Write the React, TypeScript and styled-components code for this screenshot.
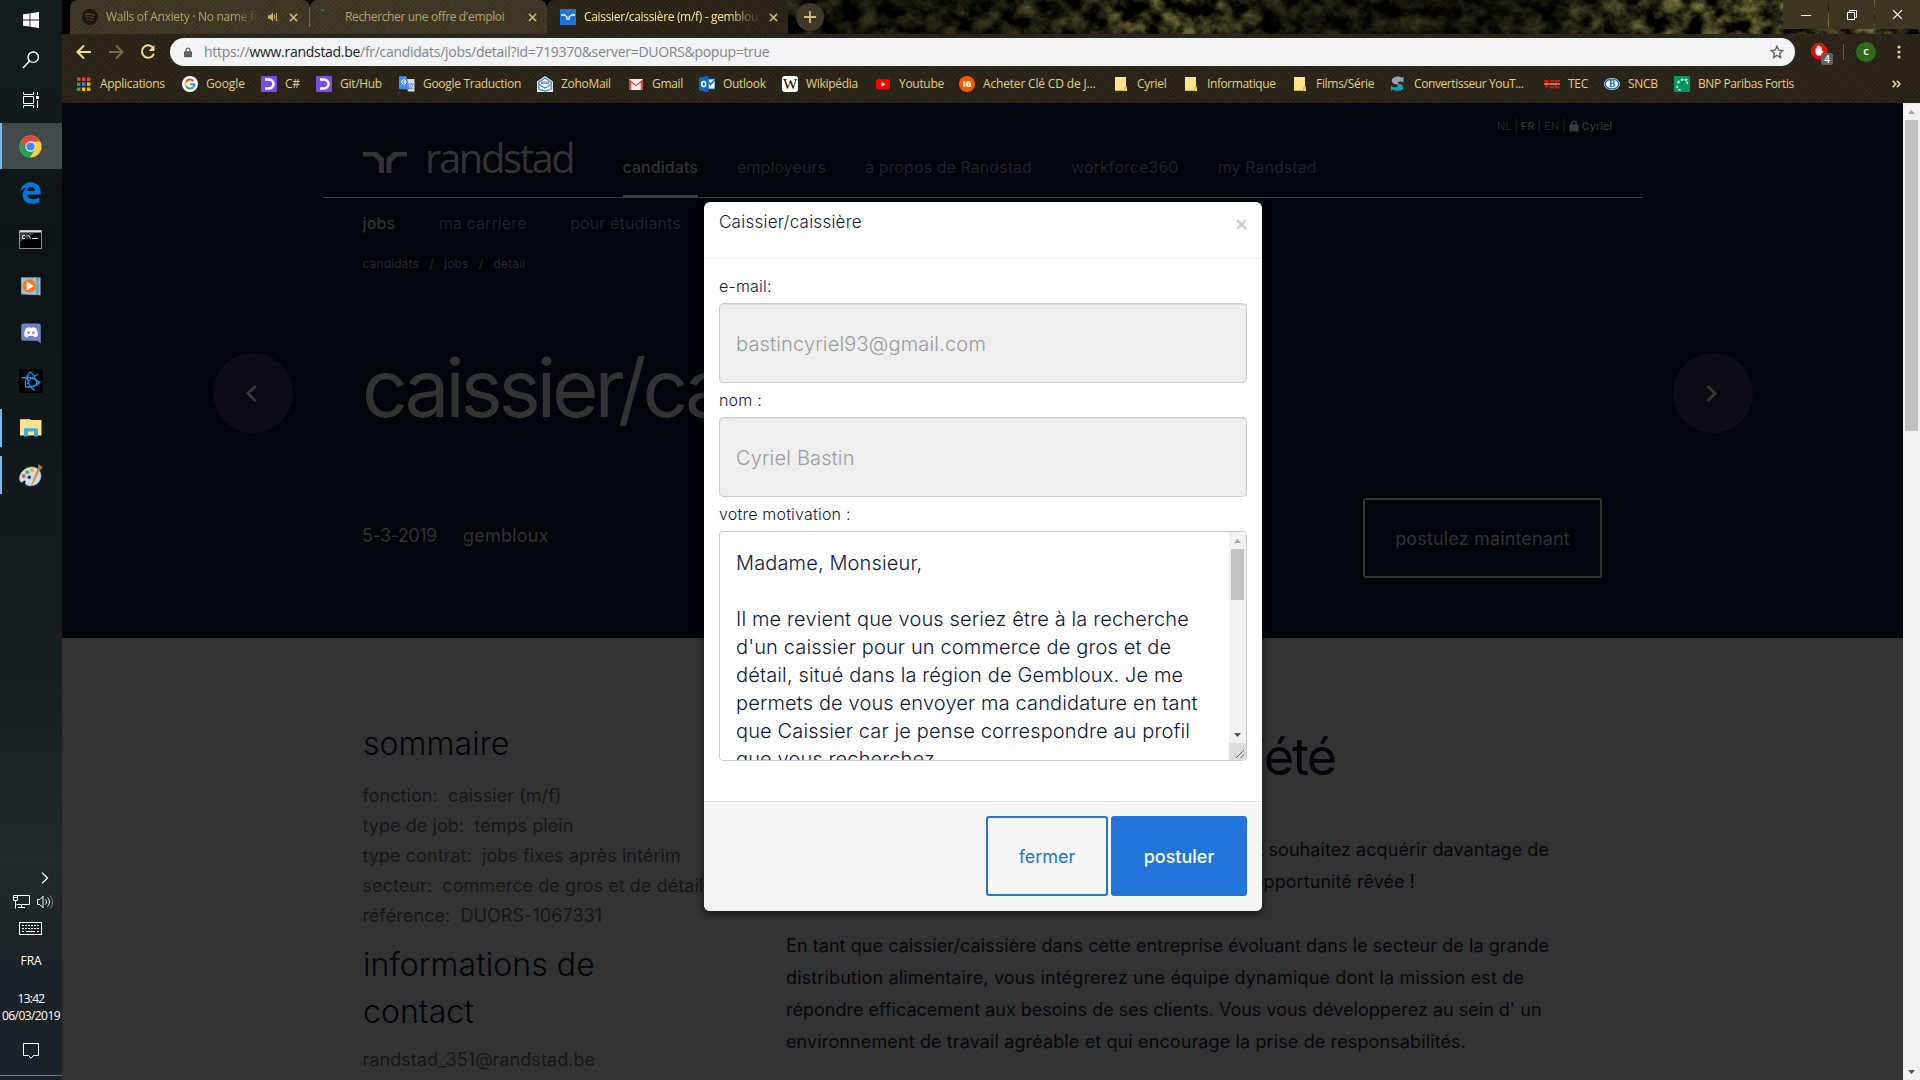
import React from 'react';
import styled, { createGlobalStyle, css } from 'styled-components';

const ui = '"Open Sans", "Noto Sans", sans-serif';
const brand = 'Inter, Roboto, sans-serif';

const GlobalStyle = createGlobalStyle`
  *, *::before, *::after { box-sizing: border-box; }
  body { margin: 0; overflow: hidden; background: #000; }
  svg { display: block; flex: none; }
`;

const Screen = styled.div`
  display: flex;
  width: 1920px;
  height: 1080px;
  overflow: hidden;
`;

/* ---------- Taskbar ---------- */

const Taskbar = styled.aside`
  display: flex;
  flex-direction: column;
  flex: none;
  width: 62px;
  background: linear-gradient(#141d20 0, #111b1b 120px, #0d1415 230px, #111819 420px, #131b1d 560px, #1a2123 720px, #222a2b 860px, #1b2328 960px, #1b2229 1080px);
  color: #fff;
  font-family: ${ui};
`;

const SystemSlot = styled.div`
  display: flex;
  align-items: center;
  justify-content: center;
  height: 40px;
`;

const AppList = styled.div`
  display: flex;
  flex-direction: column;
  margin-top: 3px;
`;

const AppSlot = styled.div<{ $active?: boolean }>`
  display: flex;
  align-items: center;
  height: ${(p) => (p.$active ? 46 : 47)}px;
  background: ${(p) => (p.$active ? '#424a4b' : 'transparent')};
`;

const RunBar = styled.span<{ $state?: 'active' | 'open' }>`
  width: 2px;
  height: ${(p) => (p.$state === 'active' ? 46 : 38)}px;
  background: ${(p) => (p.$state ? '#76b9ed' : 'transparent')};
`;

const AppIcon = styled.div`
  display: flex;
  justify-content: center;
  flex: 1;
  padding-right: 3px;
`;

const Tray = styled.div`
  display: flex;
  flex-direction: column;
  align-items: center;
  margin-top: auto;
  height: 210px;
`;

const TrayChevron = styled.div`
  display: flex;
  justify-content: flex-end;
  width: 100%;
  padding: 2px 13px 0 0;
  height: 22px;
`;

const TrayPair = styled.div`
  display: flex;
  align-items: center;
  gap: 7px;
  height: 20px;
  padding-left: 5px;
`;

const TrayKeyboard = styled.div`
  margin: 10px 1px 0 0;
`;

const TrayText = styled.div<{ $top: number; $ls: number }>`
  margin-top: ${(p) => p.$top}px;
  font-size: 12px;
  line-height: 17px;
  letter-spacing: ${(p) => p.$ls}px;
  white-space: nowrap;
`;

const TrayNote = styled.div`
  margin-top: 19px;
`;

const PeekLine = styled.div`
  width: 100%;
  height: 5px;
  margin-top: auto;
  border-top: 1px solid #757a7d;
`;

/* ---------- Browser chrome ---------- */

const Browser = styled.main`
  display: flex;
  flex-direction: column;
  flex: 1;
  min-width: 0;
`;

const weave = css`
  background-image:
    repeating-linear-gradient(45deg, rgba(255, 230, 150, 0.03) 0 1px, transparent 1px 3px),
    repeating-linear-gradient(-45deg, rgba(0, 0, 0, 0.09) 0 1px, transparent 1px 4px);
`;

const TabStrip = styled.div`
  position: relative;
  display: flex;
  height: 34px;
  padding-left: 8px;
  background: #050503;
`;

const Foliage = styled.svg`
  position: absolute;
  inset: 0;
`;

const Tab = styled.div<{ $width: number; $active?: boolean }>`
  position: relative;
  display: flex;
  align-items: center;
  width: ${(p) => p.$width}px;
  height: 34px;
  border-radius: 8px 8px 0 0;
  background-color: ${(p) => (p.$active ? '#2a2418' : '#3e3726')};
  ${weave}
  color: ${(p) => (p.$active ? '#ffe890' : '#b5a26b')};
  font: 12px/20px ${ui};
`;

const TabIcon = styled.div<{ $left: number }>`
  display: flex;
  width: ${(p) => p.$left + 16}px;
  padding-left: ${(p) => p.$left}px;
`;

const TabTitle = styled.div<{ $width: number; $fade?: boolean; $ls: number }>`
  width: ${(p) => p.$width}px;
  margin-left: 8px;
  overflow: hidden;
  white-space: nowrap;
  letter-spacing: ${(p) => p.$ls}px;
  ${(p) => p.$fade && css`mask-image: linear-gradient(90deg, #000 82%, transparent);`}
`;

const TabTail = styled.div`
  display: flex;
  align-items: center;
  gap: 11px;
  margin-left: auto;
  padding-right: 10px;
`;

const TabDivider = styled.span`
  width: 1px;
  height: 20px;
  margin-right: -10px;
  background: #7a6d4a;
`;

const NewTab = styled.div`
  position: relative;
  display: flex;
  align-items: center;
  justify-content: center;
  width: 28px;
  height: 28px;
  margin: 3px 0 0 8px;
  border-radius: 50%;
  background: #40392a;
`;

const WindowControls = styled.div`
  position: relative;
  display: flex;
  gap: 1px;
  margin-left: auto;
`;

const WindowButton = styled.div`
  display: flex;
  align-items: center;
  justify-content: center;
  width: 45px;
  height: 29px;
  background: #3e3623;
`;

const Toolbar = styled.div`
  display: flex;
  align-items: center;
  height: 36px;
  padding: 0 16px 0 13px;
  background-color: #2a2418;
  ${weave}
`;

const NavIcons = styled.div`
  display: flex;
  align-items: center;
  gap: 14px;
  width: 95px;
`;

const AddressBar = styled.div`
  display: flex;
  align-items: center;
  width: 1625px;
  height: 28px;
  padding: 0 11px 0 14px;
  border-radius: 14px;
  background: #f1f3f4;
`;

const Url = styled.div`
  flex: 1;
  margin-left: 12px;
  color: #80868b;
  font: 14px/20px ${ui};
  letter-spacing: -0.29px;
  white-space: nowrap;
`;

const Host = styled.span`
  color: #202124;
`;

const Extensions = styled.div`
  display: flex;
  align-items: center;
  flex: 1;
  padding-left: 16px;
`;

const ExtDivider = styled.span`
  width: 1px;
  height: 16px;
  margin: 0 12px 0 10px;
  background: #6a5e3e;
`;

const Avatar = styled.span`
  width: 20px;
  height: 20px;
  margin-right: 21px;
  border-radius: 50%;
  background: #33691e;
  color: #fff;
  font: 600 11px/18px ${ui};
  text-align: center;
`;

const BookmarkBar = styled.nav`
  display: flex;
  align-items: center;
  height: 33px;
  padding: 0 0 5px 14px;
  background-color: #2a2418;
  ${weave}
  color: #e3cf7f;
  font: 12px/20px ${ui};
`;

const Bookmark = styled.div<{ $pitch: number; $ls?: number }>`
  display: flex;
  align-items: center;
  gap: 8px;
  flex: none;
  width: ${(p) => p.$pitch}px;
  letter-spacing: ${(p) => p.$ls ?? -0.3}px;
  white-space: nowrap;
`;

const More = styled.div`
  margin-left: auto;
  padding-right: 19px;
`;

/* ---------- Page ---------- */

const Viewport = styled.div`
  position: relative;
  display: flex;
  flex: 1;
  min-height: 0;
`;

const Page = styled.div`
  flex: 1;
  overflow: hidden;
  background: #333;
  font-family: ${brand};
`;

const Hero = styled.section`
  display: flex;
  flex-direction: column;
  height: 535px;
  background: #02040c;
  color: #333;
`;

const Container = styled.div`
  width: 1320px;
  margin-left: 261px;
`;

const Languages = styled.div`
  display: flex;
  align-items: center;
  justify-content: flex-end;
  height: 33px;
  padding: 13px 31px 0 0;
  gap: 3px;
  font-size: 11px;
  line-height: 20px;
  color: #24262b;
`;

const Strong = styled.span`
  color: #343436;
  font-weight: 500;
  letter-spacing: -0.1px;
`;

const Masthead = styled.header`
  display: flex;
  height: 62px;
  padding-left: 40px;
  border-bottom: 1px solid #3c3c3e;
`;

const Logo = styled.div`
  display: flex;
  align-items: flex-start;
  width: 259.500px;
  padding-top: 16px;
`;

const LogoWord = styled.div`
  margin: -21px 0 0 18px;
  font: 40px/54px "Open Sans", "Noto Sans", sans-serif;
  letter-spacing: -2.400px;
`;

const MainNav = styled.nav`
  display: flex;
  gap: 39.2px;
`;

const MainLink = styled.a<{ $active?: boolean }>`
  height: 61px;
  padding-top: 21px;
  border-bottom: 2px solid ${(p) => (p.$active ? '#3c3c3e' : 'transparent')};
  color: ${(p) => (p.$active ? '#333' : '#202228')};
  font-size: 16px;
  font-weight: ${(p) => (p.$active ? 500 : 400)};
  line-height: 20px;
  letter-spacing: 0.06px;
  white-space: nowrap;
`;

const SubNav = styled.nav`
  display: flex;
  gap: 43.500px;
  padding: 15px 0 0 39.500px;
`;

const SubLink = styled.a<{ $active?: boolean }>`
  color: ${(p) => (p.$active ? '#333' : '#202228')};
  font-size: 16px;
  font-weight: ${(p) => (p.$active ? 500 : 400)};
  line-height: 20px;
  letter-spacing: 0.12px;
`;

const Crumbs = styled.div`
  display: flex;
  gap: 10.400px;
  margin-top: 23px;
  padding-left: 39.500px;
  color: #26282c;
  font-size: 12px;
  line-height: 16px;
  letter-spacing: 0.12px;
`;

const TitleRow = styled.div`
  display: flex;
  width: 1540px;
  height: 80px;
  margin: 81px 0 0 151px;
`;

const RoundButton = styled.div`
  display: flex;
  align-items: center;
  justify-content: center;
  flex: none;
  width: 80px;
  height: 80px;
  padding: 1px 4px 0 0;
  border-radius: 50%;
  background: #0c0c14;
`;

const JobTitle = styled.h1`
  flex: 1;
  margin: 0 0 0 69px;
  font-size: 80px;
  font-weight: 400;
  line-height: 70px;
  letter-spacing: -4.1px;
`;

const MetaRow = styled.div`
  display: flex;
  align-items: center;
  margin-top: 65px;
  padding: 0 41px 0 39px;
  font-size: 18px;
`;

const Meta = styled.span<{ $width: number; $ls: number }>`
  width: ${(p) => p.$width}px;
  padding-bottom: 6px;
  letter-spacing: ${(p) => p.$ls}px;
`;

const ApplyNow = styled.div`
  width: 239px;
  height: 80px;
  margin-left: auto;
  border: 2px solid #333;
  border-radius: 3px;
  line-height: 77px;
  letter-spacing: 0.15px;
  text-align: center;
`;

const Details = styled.section`
  display: flex;
  width: 1320px;
  margin-left: 261px;
  padding-left: 40px;
`;

const Summary = styled.div`
  width: 423px;
  padding-top: 82px;
`;

const SideHeading = styled.h2`
  width: 260px;
  margin: 0;
  color: #03050d;
  font-size: 32px;
  font-weight: 350;
  line-height: 47px;
  letter-spacing: 0.05px;
`;

const Facts = styled.div<{ $top: number; $bottom: number }>`
  margin: ${(p) => p.$top}px 0 ${(p) => p.$bottom}px -0.5px;
  color: #161719;
  font-size: 18px;
  line-height: 30px;
  letter-spacing: 0.06px;
  white-space: pre;
`;

const Company = styled.div`
  padding-top: 89px;
`;

const CompanyHeading = styled.h2`
  width: 549px;
  margin: 0 0 47px;
  color: #03050d;
  font-size: 52px;
  font-weight: 400;
  line-height: 60px;
  letter-spacing: -2px;
  text-align: right;
`;

const Line = styled.div<{ $right?: number; $ls?: number }>`
  width: ${(p) => (p.$right ? `${p.$right}px` : 'auto')};
  height: 32px;
  color: #07080c;
  font-size: 18px;
  line-height: 32px;
  letter-spacing: ${(p) => p.$ls ?? 0.06}px;
  text-align: ${(p) => (p.$right ? 'right' : 'left')};
  white-space: nowrap;
`;

const Scrollbar = styled.div`
  display: flex;
  flex-direction: column;
  align-items: center;
  flex: none;
  width: 17px;
  background: #f1f1f1;
`;

const ScrollArrow = styled.div`
  display: flex;
  align-items: center;
  justify-content: center;
  height: 17px;
`;

const Thumb = styled.div<{ $height: number }>`
  width: 13px;
  height: ${(p) => p.$height}px;
  margin-bottom: auto;
  background: #c1c1c1;
`;

/* ---------- Modal ---------- */

const Modal = styled.div`
  position: absolute;
  left: 642px;
  top: 99px;
  display: flex;
  flex-direction: column;
  width: 558px;
  height: 709px;
  border-radius: 6px;
  overflow: hidden;
  background: #fff;
  box-shadow: 0 3px 9px rgba(0, 0, 0, 0.6);
  color: #0f1941;
  font-family: ${brand};
  font-weight: 350;
`;

const ModalHeader = styled.div`
  display: flex;
  justify-content: space-between;
  height: 57px;
  padding: 8px 15px 0;
  border-bottom: 1px solid #eee;
  font-size: 17px;
  line-height: 24px;
  letter-spacing: 0.24px;
`;

const Close = styled.div`
  padding: 9px 0 0;
`;

const ModalBody = styled.div`
  flex: 1;
  padding: 16px 15px 0;
`;

const Label = styled.div<{ $first?: boolean }>`
  height: ${(p) => (p.$first ? 28 : 34)}px;
  padding-top: ${(p) => (p.$first ? 1 : 7)}px;
  font-size: 16px;
  line-height: 20px;
  letter-spacing: 0.2px;
`;

const Field = styled.div`
  height: 80px;
  padding: 0 16px;
  border: 1px solid #ccc;
  border-radius: 4px;
  background: #eee;
  box-shadow: inset 0 1px 1px rgba(0, 0, 0, 0.075);
  color: #9c9c9c;
  font-size: 20px;
  line-height: 80px;
  letter-spacing: 0.18px;
`;

const Letter = styled.div`
  display: flex;
  height: 230px;
  border: 1px solid #ccc;
  border-radius: 4px;
  overflow: hidden;
`;

const LetterText = styled.div`
  flex: 1;
  height: 228px;
  padding: 17px 0 0 16px;
  overflow: hidden;
  font-size: 20px;
  line-height: 28px;
  letter-spacing: 0.14px;
  white-space: pre;
`;

const LetterSide = styled.div`
  display: flex;
  flex-direction: column;
  width: 17px;
`;

const LetterScroll = styled(Scrollbar)`
  height: 211px;
`;

const Grip = styled.div`
  height: 17px;
  background: #dcdcdc;
`;

const ModalFooter = styled.div`
  display: flex;
  justify-content: flex-end;
  gap: 3px;
  height: 110px;
  padding: 14px 15px 0;
  border-top: 1px solid #ddd;
  background: #f5f5f5;
  box-shadow: inset 0 1px 0 #fff;
`;

const Button = styled.div<{ $primary?: boolean }>`
  width: ${(p) => (p.$primary ? 136 : 122)}px;
  height: 80px;
  border: 2px solid #2175d9;
  border-radius: 3px;
  background: ${(p) => (p.$primary ? '#2175d9' : 'transparent')};
  color: ${(p) => (p.$primary ? '#fff' : '#2175d9')};
  font-size: 18px;
  font-weight: ${(p) => (p.$primary ? 500 : 400)};
  line-height: 78px;
  text-align: center;
`;

/* ---------- Icons ---------- */

const W = '#fff';

const WindowsIcon = () => (
  <svg width="16" height="16" viewBox="0 0 16 16" fill={W}>
    <path d="M0 2.3 6.5 1.4V7.4H0zM7.4 1.2 16 0v7.4H7.4zM0 8.4h6.5v6.2L0 13.7zM7.4 8.4H16V16l-8.6-1.2z" />
  </svg>
);
const SearchIcon = () => (
  <svg width="18" height="18" viewBox="0 0 18 18" fill="none" stroke={W} strokeWidth="1.4">
    <circle cx="11.2" cy="6.2" r="5.2" /><path d="M7.5 10 1 17" />
  </svg>
);
const TaskViewIcon = () => (
  <svg width="17" height="16" viewBox="0 0 17 16" fill="none" stroke={W}>
    <path d="M.5 0v2.5h10V0M.5 16v-2.5h10V16M.5 4.5h10v7H.5zM14.5 0v3M14.5 8.500v7.500" strokeWidth="1" />
    <rect x="13" y="4" width="3" height="3" fill={W} stroke="none" />
  </svg>
);
const ChromeIcon = () => (
  <svg width="23" height="23" viewBox="0 0 24 24">
    <circle cx="12" cy="12" r="11.500" fill="#ffcd42" />
    <path d="M12 12 2 6.200A11.500 11.500 0 0 0 11.500 23.500L16.800 14.700z" fill="#1aa260" />
    <path d="M2 6.200A11.500 11.500 0 0 1 22.200 6.700H12L7 14.700z" fill="#dd4b3e" />
    <circle cx="12" cy="12" r="5.400" fill="#f1f1f1" /><circle cx="12" cy="12" r="4.300" fill="#4688f1" />
  </svg>
);
const EdgeIcon = () => (
  <svg width="21" height="22" viewBox="0 0 21 22" fill="#0078d7">
    <path d="M.3 9.800C1.200 3.800 5.400.3 10.600.3c5.900 0 10 4 10 9.700v2.500H7.200c.3 3.200 3 4.700 6.100 4.700 2.200 0 4-.6 5.700-1.600v4.600c-2 1-4.300 1.500-6.800 1.500-5.800 0-9.600-3.300-9.600-8.600 0-3.700 2-6.500 5.300-8-3.200.3-5.900 2-7.600 4.700zM7.300 8.900h7.600c0-2.400-1.300-3.900-3.600-3.900-2.200 0-3.700 1.500-4 3.900z" />
  </svg>
);
const CmdIcon = () => (
  <svg width="23" height="19" viewBox="0 0 23 19">
    <rect x=".5" y=".5" width="22" height="18" fill="#000" stroke="#8b8f92" />
    <path d="M1 1.500h21" stroke="#dfe3e5" strokeWidth="2" />
    <path d="M1 3h15L1 12z" fill="#3a3c3e" />
    <path d="M6 5.500H3.500v3H6M8 5.500v.8M8 7.700v.8M9.500 5l2 4M13 8.500h6" stroke="#e4e4e4" fill="none" />
  </svg>
);
const MediaIcon = () => (
  <svg width="20" height="19" viewBox="0 0 20 19">
    <path d="M13 .5h6.500v18L13 17.500z" fill="#8cc7de" /><path d="M17 .6v17.600" stroke="#4d8da8" />
    <path d="M.5.8h15v17L.5 17z" fill="#9cc5d8" stroke="#6fa5bb" />
    <circle cx="8.300" cy="9" r="6.700" fill="#f37a20" /><path d="M5.700 4.600v9l7-4.500z" fill={W} />
  </svg>
);
const DiscordIcon = () => (
  <svg width="20" height="21" viewBox="0 0 20 21">
    <path d="M2.500.5h15A2.300 2.300 0 0 1 19.800 2.800V20.500L16.300 17.800H2.500A2.300 2.300 0 0 1 .2 15.500V2.800A2.300 2.300 0 0 1 2.500.5z" fill="#7184c9" />
    <path d="M5 5.500c1.500-1 2.300-1.200 3.300-1.300l.5.600h2.600l.5-.6c1 .1 1.800.4 3.200 1.300 1.300 2.300 1.800 4.700 1.700 7.200-1 1.100-2 1.500-3.300 1.600l-.9-1.300H7.500l-.9 1.300c-1.300-.1-2.400-.6-3.300-1.600-.1-2.500.4-4.900 1.700-7.200z" fill={W} />
    <circle cx="7.600" cy="9.700" r="1.300" fill="#7184c9" /><circle cx="12.300" cy="9.700" r="1.300" fill="#7184c9" />
  </svg>
);
const BattleNetIcon = () => (
  <svg width="24" height="24" viewBox="0 0 24 24" fill="none" stroke="#1a9bea" strokeWidth="1.200">
    <rect width="24" height="24" rx="1.500" fill="#000" stroke="none" />
    <path d="M2 9c6-1.500 14-.5 18.500 4.500-1.500 3-8 4.500-13.500 4.500-2-4 1-12.500 4-15 3 1.500 6.500 7.500 7 13" />
    <path d="M9 6c-1 6 2 12 6.500 15.500M21.500 12.500C17 17 10 19.500 6.500 17.500M8 15.500c1-4.500 6-8.500 11.500-10" />
  </svg>
);
const ExplorerIcon = () => (
  <svg width="22" height="19" viewBox="0 0 22 19">
    <path d="M0 2V1h10l1 1z" fill="#f2bc2b" /><path d="M0 2h21.500v15.500H0z" fill="#ffe391" />
    <path d="M4 18.500v-7.200a1 1 0 0 1 1-1h12a1 1 0 0 1 1 1v7.200h-4v-5H8v5z" fill="#35b0e4" />
  </svg>
);
const PaintIcon = () => (
  <svg width="24" height="24" viewBox="0 0 24 24">
    <path d="M13 4C6 4 .5 10 .5 15c0 4 2.500 5 3.500 3.500 1.500-2 3-1 2.500 1-.5 2 1.500 3.300 5 3.300 6.500 0 10.500-5 10.500-10S18 4 13 4z" fill="#c6deed" stroke="#8fb7cf" strokeWidth=".6" />
    <circle cx="4.800" cy="13" r="2" fill="#d95a50" /><circle cx="8.300" cy="9.300" r="2" fill="#5eb053" /><circle cx="13" cy="7.300" r="2.200" fill="#f2b134" /><circle cx="10.300" cy="14.300" r="1.700" fill="#1c3242" />
    <path d="M11.500 23.500c1-3 3-8 6.500-16l2 1c-3 7-5.500 12-8.500 15z" fill="#e58a2b" /><path d="M18 7.500 19.500 3l-1-2.500L24 4.500 20 8.500z" fill="#a97850" />
  </svg>
);
const ChevronTray = () => (
  <svg width="8" height="12" viewBox="0 0 8 12" fill="none" stroke={W} strokeWidth="1.300"><path d="m1 .6 5.500 5.400L1 11.400" /></svg>
);
const NetworkIcon = () => (
  <svg width="17" height="14" viewBox="0 0 17 14" fill="none" stroke={W}>
    <path d="M5 .5h11.500v9H3.500M.5.500h4v5h-4zM2.500 5.500v8M0 2.500h5M8.500 9.500v3M5 12.500h7" />
  </svg>
);
const VolumeIcon = () => (
  <svg width="17" height="14" viewBox="0 0 17 14" fill="none" stroke={W}>
    <path d="M.6 4.500h2.200L6 1.200v11.600L2.800 9.500H.6zM8.500 4.500c1.300 1.500 1.300 3.500 0 5M10.500 2.500c2.500 2.500 2.500 6.500 0 9" />
    <path d="M13 .5c3.500 4 3.500 9 0 13" stroke="#7c8384" />
  </svg>
);
const KeyboardIcon = () => (
  <svg width="23" height="13" viewBox="0 0 23 13" fill="none" stroke={W}>
    <rect x=".5" y=".5" width="22" height="12" />
    <path d="M3 3.500h17M3 6.500h17" strokeDasharray="2 1" /><path d="M3 9.500h2M7 9.500h9M18 9.500h2" />
  </svg>
);
const NoteIcon = () => (
  <svg width="16" height="17" viewBox="0 0 16 17" fill="none" stroke={W}><path d="M.5.500h15v12H10.500L8 15.200 5.500 12.500H.5z" /></svg>
);

const SpotifyIcon = () => (
  <svg width="16" height="16" viewBox="0 0 16 16" fill="none" stroke="#4a402c">
    <circle cx="8" cy="8" r="8" fill="#1b1710" stroke="none" />
    <path d="M3 5.500c3.500-1 7-.6 10 1" strokeWidth="1.700" /><path d="M3.500 8.300c3-.8 6-.4 8.500.9" strokeWidth="1.400" /><path d="M4 10.900c2.500-.6 5-.3 7 .8" strokeWidth="1.200" />
  </svg>
);
const LoadingIcon = () => (
  <svg width="16" height="16" viewBox="0 0 16 16" fill="none"><path d="M0 1h3" stroke="#3d8b94" /></svg>
);
const RandstadFavicon = () => (
  <svg width="16" height="16" viewBox="0 0 16 16"><rect width="16" height="16" fill="#2175d9" /><path d="M1 6h3.500L7 8v3M15 6h-3.500L9 8v3" fill="none" stroke={W} strokeWidth="1.400" /></svg>
);
const SpeakerIcon = () => (
  <svg width="10" height="10" viewBox="0 0 10 10" fill="#c9b67c" stroke="#c9b67c"><path d="M0 3.200h2.300L5 .6v8.800L2.300 6.800H0z" stroke="none" /><path d="M6.500 2.800v4.400M8.500.8v8.400" /></svg>
);
const CrossIcon = ({ size = 9, color = '#c9b67c', width = 1.7 }: { size?: number; color?: string; width?: number }) => (
  <svg width={size} height={size} viewBox="0 0 10 10" stroke={color} strokeWidth={width}><path d="m1 1 8 8M9 1 1 9" /></svg>
);
const PlusIcon = () => (
  <svg width="12" height="12" viewBox="0 0 12 12" stroke="#d3bf80" strokeWidth="1.800"><path d="M6 0v12M0 6h12" /></svg>
);
const ArrowIcon = ({ flip, color }: { flip?: boolean; color: string }) => (
  <svg width="18" height="18" viewBox="0 0 18 18" fill="none" stroke={color} strokeWidth="2"><path d={flip ? 'M2 9h13M9 2.500 15.500 9 9 15.500' : 'M16 9H3M9 2.500 2.500 9 9 15.500'} /></svg>
);
const ReloadIcon = () => (
  <svg width="18" height="18" viewBox="0 0 18 18" fill="none" stroke="#f5dd8d" strokeWidth="2"><path d="M14.200 5A6.200 6.200 0 1 0 15 10.500" /><path d="M15.500 2v6h-6z" fill="#f5dd8d" stroke="none" /></svg>
);
const LockIcon = ({ color, w, h }: { color: string; w: number; h: number }) => (
  <svg width={w} height={h} viewBox="0 0 10 13"><path d="M1 5h8a1 1 0 0 1 1 1v5.500a1 1 0 0 1-1 1H1a1 1 0 0 1-1-1V6a1 1 0 0 1 1-1z" fill={color} /><path d="M2.500 5.500V3.500a2.500 2.500 0 0 1 5 0v2" fill="none" stroke={color} strokeWidth="1.400" /></svg>
);
const StarIcon = () => (
  <svg width="14" height="14" viewBox="0 0 14 14" fill="none" stroke="#5f6368" strokeWidth="1.400"><path d="m7 1.200 1.700 3.900 4.200.4-3.200 2.800.9 4.200L7 10.300l-3.600 2.200.9-4.200L1.100 5.500l4.200-.4z" /></svg>
);
const AdblockIcon = () => (
  <svg width="22" height="27" viewBox="0 -4 22 27">
    <path d="M4.700 0h6.600L16 4.700v6.600L11.300 16H4.700L0 11.300V4.700z" fill="#e40d0d" />
    <path d="M4.500 8V5.500h1.200V3.300H7v-.8h1.300v.8h1.300v1.300h1.200v4l1.200-1 .6.700-2.500 4.200H6.200L4.500 10z" fill={W} />
    <rect x="10" y="10" width="12" height="12" rx="2" fill="#616161" />
    <text x="16" y="19.800" fill="#fff" fontFamily="Open Sans, sans-serif" fontWeight="600" fontSize="10" textAnchor="middle">4</text>
  </svg>
);
const DotsIcon = () => (
  <svg width="4" height="14" viewBox="0 0 4 14" fill="#e8d288"><circle cx="2" cy="2" r="1.600" /><circle cx="2" cy="7" r="1.600" /><circle cx="2" cy="12" r="1.600" /></svg>
);
const MoreIcon = () => (
  <svg width="9" height="8" viewBox="0 0 9 8" fill="none" stroke="#e8d288" strokeWidth="1.700"><path d="m.7.7 3 3.300-3 3.300M4.900.7l3 3.300-3 3.300" /></svg>
);

const AppsIcon = () => {
  const colors = ['#ea4335', '#ea4335', '#ea4335', '#34a853', '#4285f4', '#fbbc05', '#34a853', '#fbbc05', '#fbbc05'];
  return (
    <svg width="16" height="16" viewBox="0 0 16 16">
      {colors.map((c, i) => <rect key={i} x={1 + (i % 3) * 5} y={1.500 + Math.floor(i / 3) * 5} width="3.400" height="3.400" fill={c} />)}
    </svg>
  );
};
const GoogleIcon = () => (
  <svg width="16" height="16" viewBox="0 0 16 16" fill="none" strokeWidth="2">
    <circle cx="8" cy="8" r="8" fill={W} />
    <path d="M4.200 5.800A4.400 4.400 0 0 1 11.300 5" stroke="#ea4335" /><path d="M4.200 5.700a4.600 4.600 0 0 0 0 4.600" stroke="#fbbc05" />
    <path d="M4.200 10.200a4.400 4.400 0 0 0 6.900 1.100" stroke="#34a853" /><path d="M11.100 11.300c.9-.8 1.300-1.900 1.300-3H8" stroke="#4285f4" />
  </svg>
);
const CrescentIcon = () => (
  <svg width="16" height="16" viewBox="0 0 16 16"><rect width="16" height="16" rx="1" fill="#7350ea" /><path d="M4 3.500h4a4.500 4.500 0 0 1 0 9H4" fill="none" stroke={W} strokeWidth="2.600" /><circle cx="5" cy="8" r="3" fill="#7350ea" /></svg>
);
const TranslateIcon = () => (
  <svg width="16" height="16" viewBox="0 0 16 16"><path d="M6 3h9.500v12.500H9z" fill="#d9dde0" /><path d="M0 1.200A1 1 0 0 1 1 .2h6.500l3.500 13H1a1 1 0 0 1-1-1z" fill="#4a8af4" /><path d="M7 5.200H4.800M6.300 4.300a2.200 2.200 0 1 0 .7 2H4.800" fill="none" stroke={W} /><path d="M10 8h4.500M12.300 7v1M11 13c2-1.200 2.700-3 2.800-5M11 9.500c.6 1.700 1.700 2.900 3.200 3.500" fill="none" stroke="#6b7a86" strokeWidth=".8" /></svg>
);
const ZohoIcon = () => (
  <svg width="16" height="16" viewBox="0 0 16 16"><path d="M0 5.500 8 0l8 5.500V16H0z" fill="#e9f2f7" /><path d="M1.800 6.300 8 2l6.200 4.300V13L8 15l-6.200-2z" fill={W} stroke="#3c8dbc" strokeWidth="1.300" /><path d="m2 8.500 6 3.500 6-3.500M4.500 8V6h7v2" fill="none" stroke="#3c8dbc" strokeWidth="1.200" /><path d="M5 7.500h6" stroke="#e08e3d" /></svg>
);
const GmailIcon = () => (
  <svg width="16" height="16" viewBox="0 0 16 16"><path d="M1 3h14v11H1z" fill="#eceff1" /><path d="M1 14V3l7 6 7-6v11h-2.200V6.500L8 10.500l-4.800-4V14z" fill="#d9453b" /></svg>
);
const OutlookIcon = () => (
  <svg width="16" height="16" viewBox="0 0 16 16"><path d="M9 3h7v10H9z" fill={W} stroke="#0b6ec5" /><path d="m9.500 6 2 2.500L15.500 4" fill="none" stroke="#0b6ec5" strokeWidth="1.500" /><path d="M0 1.700 9.500 0v16L0 14.300z" fill="#0b6ec5" /><ellipse cx="4.700" cy="8" rx="2" ry="2.600" fill="none" stroke={W} strokeWidth="1.500" /></svg>
);
const WikipediaIcon = () => (
  <svg width="16" height="16" viewBox="0 0 16 16"><rect width="16" height="16" rx="3" fill={W} /><text x="8" y="12.800" fontFamily="Liberation Serif, serif" fontSize="14" textAnchor="middle" fill="#000" textLength="14" lengthAdjust="spacingAndGlyphs">W</text></svg>
);
const YoutubeIcon = () => (
  <svg width="16" height="16" viewBox="0 0 16 16"><rect x="1" y="3" width="14" height="10.500" rx="2.500" fill="#f00" /><path d="M6.500 6v4.500l4-2.200z" fill={W} /></svg>
);
const IgIcon = () => (
  <svg width="16" height="16" viewBox="0 0 16 16"><circle cx="8" cy="8" r="8" fill="#ff5400" /><text x="8" y="11" fontFamily="Open Sans, sans-serif" fontWeight="800" fontSize="8" textAnchor="middle" fill={W}>IG</text></svg>
);
const FolderIcon = () => (
  <svg width="16" height="16" viewBox="0 0 16 16"><path d="M2 1h11v9.500h1V15H2z" fill="#ffe28b" /><path d="M11.500 15v-3.500L13 10.500v3M2 14.500h9.500" stroke="#d8a93a" strokeWidth=".9" fill="none" /></svg>
);
const ConvertIcon = () => (
  <svg width="16" height="16" viewBox="0 0 16 16"><path d="M13.500 0v6.500C12 5 9 5 7.500 6.500L10 9 4 8C1 6 1 3 4 1.500 7 0 10 .5 12 2z" fill="#9da3a4" /><path d="M1 9.500c2 2 5 2.500 7 .5L6.500 8.500 11 8.300c3 1.700 3 4.200 1 5.700-3 2-7 1.500-9-.5L1 15z" fill="#1da0b8" /><path d="M3 13c2 1.200 5 1.500 7.500.5L8 15.500z" fill="#145f6e" /></svg>
);
const TecIcon = () => (
  <svg width="16" height="16" viewBox="0 0 16 16" fill="none" stroke="#e3141c" strokeWidth="1.700"><path d="M0 4.800h5M2.500 5v7M6 4.800h4.500M6 8h4M5.500 11.300h4.500M16 4.800h-4L11.500 11.300H15.500" /><path d="M0 8h16" stroke="#f6a800" strokeWidth="1.300" /></svg>
);
const SncbIcon = () => (
  <svg width="16" height="16" viewBox="0 0 16 16"><ellipse cx="8" cy="8" rx="8" ry="6" fill={W} /><ellipse cx="8" cy="8" rx="6.800" ry="4.900" fill="none" stroke="#0f68b0" strokeWidth="1.400" /><text x="8" y="11.300" fontFamily="Liberation Serif, serif" fontWeight="700" fontSize="9.500" textAnchor="middle" fill="#0f68b0">B</text></svg>
);
const BnpIcon = () => (
  <svg width="16" height="16" viewBox="0 0 16 16"><rect width="16" height="16" fill="#00965e" /><path d="m2.500 12 .5-2.500 1 2zM4 14l2-1 .5 1.300zM3 7l2-2.500.4 2zM6.500 4 9 2.500 9 4.500zM10.500 3l3 .5-2 1.500zM12 6.500l1.500-1V8z" fill={W} stroke={W} strokeWidth=".5" /></svg>
);

const Triangle = ({ down, color = '#a3a3a3' }: { down?: boolean; color?: string }) => (
  <svg width="7" height="4" viewBox="0 0 7 4" fill={color}><path d={down ? 'M0 0h7L3.500 4z' : 'M0 4h7L3.500 0z'} /></svg>
);
const HeroChevron = ({ left }: { left?: boolean }) => (
  <svg width="11" height="17" viewBox="0 0 11 17" fill="none" stroke="#38383a" strokeWidth="2.600"><path d={left ? 'M9.500 1 2 8.500 9.500 16' : 'm1.500 1 7.500 7.500L1.500 16'} /></svg>
);
const RandstadMark = () => (
  <svg width="44" height="21" viewBox="0 0 44 21" fill="#333"><path d="M0 0h14l7 6.500V21h-5V10l-5.500-5.500H0zM44 0H30.500l-7 6.500V21h5V10L34 4.500h10z" /></svg>
);

/* ---------- Data ---------- */

const bookmarks: { label: string; icon: () => React.ReactElement; pitch: number; ls?: number }[] = [
  { label: 'Applications', icon: AppsIcon, pitch: 106 },
  { label: 'Google', icon: GoogleIcon, pitch: 79, ls: -0.1 },
  { label: 'C#', icon: CrescentIcon, pitch: 55 },
  { label: 'Git/Hub', icon: CrescentIcon, pitch: 83 },
  { label: 'Google Traduction', icon: TranslateIcon, pitch: 138 },
  { label: 'ZohoMail', icon: ZohoIcon, pitch: 91 },
  { label: 'Gmail', icon: GmailIcon, pitch: 71 },
  { label: 'Outlook', icon: OutlookIcon, pitch: 83 },
  { label: 'Wikipédia', icon: WikipediaIcon, pitch: 93 },
  { label: 'Youtube', icon: YoutubeIcon, pitch: 84 },
  { label: 'Acheter Clé CD de J...', icon: IgIcon, pitch: 154, ls: -0.17 },
  { label: 'Cyriel', icon: FolderIcon, pitch: 70 },
  { label: 'Informatique', icon: FolderIcon, pitch: 109, ls: -0.4 },
  { label: 'Films/Série', icon: FolderIcon, pitch: 98 },
  { label: 'Convertisseur YouT...', icon: ConvertIcon, pitch: 154, ls: -0.4 },
  { label: 'TEC', icon: TecIcon, pitch: 60 },
  { label: 'SNCB', icon: SncbIcon, pitch: 70 },
  { label: 'BNP Paribas Fortis', icon: BnpIcon, pitch: 140, ls: -0.4 },
];

const apps: { icon: () => React.ReactElement; state?: 'active' | 'open' }[] = [
  { icon: ChromeIcon, state: 'active' },
  { icon: EdgeIcon },
  { icon: CmdIcon },
  { icon: MediaIcon },
  { icon: DiscordIcon },
  { icon: BattleNetIcon },
  { icon: ExplorerIcon, state: 'open' },
  { icon: PaintIcon, state: 'open' },
];

const letter = `Madame, Monsieur,

Il me revient que vous seriez être à la recherche
d'un caissier pour un commerce de gros et de
détail, situé dans la région de Gembloux. Je me
permets de vous envoyer ma candidature en tant
que Caissier car je pense correspondre au profil
que vous recherchez.`;

export default function App() {
  return (
    <Screen>
      <GlobalStyle />
      <Taskbar>
        <SystemSlot><WindowsIcon /></SystemSlot>
        <SystemSlot><SearchIcon /></SystemSlot>
        <SystemSlot><TaskViewIcon /></SystemSlot>
        <AppList>
          {apps.map(({ icon: Icon, state }, i) => (
            <AppSlot key={i} $active={state === 'active'}>
              <RunBar $state={state} />
              <AppIcon><Icon /></AppIcon>
            </AppSlot>
          ))}
        </AppList>
        <Tray>
          <TrayChevron><ChevronTray /></TrayChevron>
          <TrayPair><NetworkIcon /><VolumeIcon /></TrayPair>
          <TrayKeyboard><KeyboardIcon /></TrayKeyboard>
          <TrayText $top={17} $ls={-0.1}>FRA</TrayText>
          <TrayText $top={21} $ls={-0.75}>13:42</TrayText>
          <TrayText $top={0} $ls={-0.57}>06/03/2019</TrayText>
          <TrayNote><NoteIcon /></TrayNote>
          <PeekLine />
        </Tray>
      </Taskbar>

      <Browser>
        <TabStrip>
          <Foliage width="1858" height="34">
            <defs>
              <filter id="grain" x="0" y="0" width="100%" height="100%" colorInterpolationFilters="sRGB">
                <feTurbulence type="fractalNoise" baseFrequency="0.05 0.06" numOctaves="5" seed="21" />
                <feColorMatrix values="1.25 0 0 0 -0.43  1.2 0 0 0 -0.41  0.7 0 0 0 -0.26  0 0 0 0 1" />
              </filter>
              <linearGradient id="shade">
                <stop offset="0" stopColor="#000" />
                <stop offset=".42" stopColor="#000" stopOpacity=".65" />
                <stop offset=".54" stopColor="#000" stopOpacity=".5" />
                <stop offset=".6" stopColor="#000" stopOpacity=".05" />
                <stop offset=".66" stopColor="#000" stopOpacity=".6" />
                <stop offset=".78" stopColor="#000" stopOpacity=".7" />
                <stop offset=".88" stopColor="#000" stopOpacity=".1" />
                <stop offset="1" stopColor="#000" stopOpacity=".1" />
              </linearGradient>
            </defs>
            <rect x="700" width="1158" height="34" filter="url(#grain)" />
            <rect width="1858" height="34" fill="url(#shade)" />
          </Foliage>
          <Tab $width={240}>
            <TabIcon $left={12}><SpotifyIcon /></TabIcon>
            <TabTitle $width={154} $fade $ls={-0.3}>Walls of Anxiety · No name found</TabTitle>
            <TabTail><SpeakerIcon /><CrossIcon /><TabDivider /></TabTail>
          </Tab>
          <Tab $width={237}>
            <TabIcon $left={11}><LoadingIcon /></TabIcon>
            <TabTitle $width={165} $ls={-0.36}>Rechercher une offre d'emploi</TabTitle>
            <TabTail><CrossIcon /></TabTail>
          </Tab>
          <Tab $width={241} $active>
            <TabIcon $left={13}><RandstadFavicon /></TabIcon>
            <TabTitle $width={176} $fade $ls={-0.33}>Caissier/caissière (m/f) - gembloux</TabTitle>
            <TabTail><CrossIcon /></TabTail>
          </Tab>
          <NewTab><PlusIcon /></NewTab>
          <WindowControls>
            <WindowButton><svg width="10" height="10" viewBox="0 0 10 10" stroke="#fff"><path d="M0 5.500h10" /></svg></WindowButton>
            <WindowButton><svg width="10" height="10" viewBox="0 0 10 10" fill="none" stroke="#fff"><path d="M.5 2.500h7v7h-7zM2.500 2.500v-2h7v7h-2" /></svg></WindowButton>
            <WindowButton><CrossIcon size={11} color="#fff" width={1.1} /></WindowButton>
          </WindowControls>
        </TabStrip>

        <Toolbar>
          <NavIcons>
            <ArrowIcon color="#f5dd8d" />
            <ArrowIcon flip color="#7b6d45" />
            <ReloadIcon />
          </NavIcons>
          <AddressBar>
            <LockIcon color="#5f6368" w={8} h={11} />
            <Url>https://<Host>www.randstad.be</Host>/fr/candidats/jobs/detail?id=719370&amp;server=DUORS&amp;popup=true</Url>
            <StarIcon />
          </AddressBar>
          <Extensions>
            <AdblockIcon />
            <ExtDivider />
            <Avatar>c</Avatar>
            <DotsIcon />
          </Extensions>
        </Toolbar>

        <BookmarkBar>
          {bookmarks.map(({ label, icon: Icon, pitch, ls }) => (
            <Bookmark key={label} $pitch={pitch} $ls={ls}><Icon />{label}</Bookmark>
          ))}
          <More><MoreIcon /></More>
        </BookmarkBar>

        <Viewport>
          <Page>
            <Hero>
              <Container>
                <Languages>
                  <span>NL</span><span>|</span><Strong>FR</Strong><span>|</span><span>EN</span><span>|</span>
                  <LockIcon color="#3a3a3c" w={10} h={12} />
                  <Strong>Cyriel</Strong>
                </Languages>
                <Masthead>
                  <Logo>
                    <RandstadMark />
                    <LogoWord>randstad</LogoWord>
                  </Logo>
                  <MainNav>
                    <MainLink $active>candidats</MainLink>
                    <MainLink>employeurs</MainLink>
                    <MainLink>à propos de Randstad</MainLink>
                    <MainLink>workforce360</MainLink>
                    <MainLink>my Randstad</MainLink>
                  </MainNav>
                </Masthead>
                <SubNav>
                  <SubLink $active>jobs</SubLink>
                  <SubLink>ma carrière</SubLink>
                  <SubLink>pour étudiants</SubLink>
                </SubNav>
                <Crumbs><span>candidats</span><span>/</span><span>jobs</span><span>/</span><span>detail</span></Crumbs>
              </Container>
              <TitleRow>
                <RoundButton><HeroChevron left /></RoundButton>
                <JobTitle>caissier/caissière</JobTitle>
                <RoundButton><HeroChevron /></RoundButton>
              </TitleRow>
              <Container>
                <MetaRow>
                  <Meta $width={101} $ls={-0.5}>5-3-2019</Meta>
                  <Meta $width={120} $ls={0.22}>gembloux</Meta>
                  <ApplyNow>postulez maintenant</ApplyNow>
                </MetaRow>
              </Container>
            </Hero>
            <Details>
              <Summary>
                <SideHeading>sommaire</SideHeading>
                <Facts $top={14} $bottom={10}>
                  <div>fonction:  caissier (m/f)</div>
                  <div>type de job:  temps plein</div>
                  <div>type contrat:  jobs fixes après intérim</div>
                  <div>secteur:  commerce de gros et de détail</div>
                  <div>référence:  DUORS-1067331</div>
                </Facts>
                <SideHeading>informations de contact</SideHeading>
                <Facts $top={10} $bottom={0}>randstad_351@randstad.be</Facts>
              </Summary>
              <Company>
                <CompanyHeading>la société</CompanyHeading>
                <Line $right={763}>et souhaitez acquérir davantage de</Line>
                <Line $right={629}>opportunité rêvée !</Line>
                <Line />
                <Line>En tant que caissier/caissière dans cette entreprise évoluant dans le secteur de la grande</Line>
                <Line $ls={0.15}>distribution alimentaire, vous intégrerez une équipe dynamique dont la mission est de</Line>
                <Line $ls={0}>répondre efficacement aux besoins de ses clients. Vous vous développerez au sein d' un</Line>
                <Line $ls={0.12}>environnement de travail agréable et qui encourage la prise de responsabilités.</Line>
              </Company>
            </Details>
          </Page>
          <Scrollbar>
            <ScrollArrow><Triangle /></ScrollArrow>
            <Thumb $height={311} />
            <ScrollArrow><Triangle down color="#505050" /></ScrollArrow>
          </Scrollbar>

          <Modal>
            <ModalHeader>
              <span>Caissier/caissière</span>
              <Close><CrossIcon size={11} color="#ccc" width={2} /></Close>
            </ModalHeader>
            <ModalBody>
              <Label $first>e-mail:</Label>
              <Field>bastincyriel93@gmail.com</Field>
              <Label>nom :</Label>
              <Field>Cyriel Bastin</Field>
              <Label>votre motivation :</Label>
              <Letter>
                <LetterText>{letter}</LetterText>
                <LetterSide>
                  <LetterScroll>
                    <ScrollArrow><Triangle /></ScrollArrow>
                    <Thumb $height={51} />
                    <ScrollArrow><Triangle down color="#505050" /></ScrollArrow>
                  </LetterScroll>
                  <Grip><svg width="17" height="17" viewBox="0 0 17 17" stroke="#555" strokeWidth=".9"><path d="m7 15 8-8M11.500 15l3.500-3.500" /></svg></Grip>
                </LetterSide>
              </Letter>
            </ModalBody>
            <ModalFooter>
              <Button>fermer</Button>
              <Button $primary>postuler</Button>
            </ModalFooter>
          </Modal>
        </Viewport>
      </Browser>
    </Screen>
  );
}
